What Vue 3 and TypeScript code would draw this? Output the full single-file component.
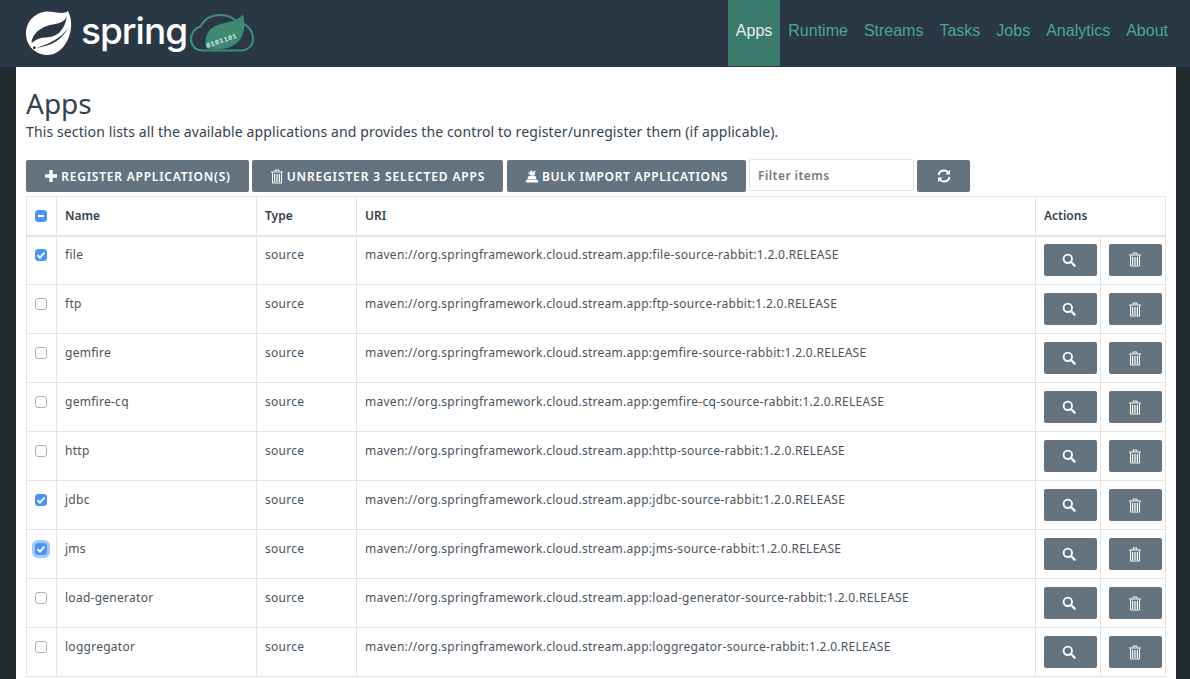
<script setup lang="ts">
interface AppRow {
  name: string;
  checked: boolean;
  focused?: boolean;
}

const navItems = ['Apps', 'Runtime', 'Streams', 'Tasks', 'Jobs', 'Analytics', 'About'];

const rows: AppRow[] = [
  { name: 'file', checked: true },
  { name: 'ftp', checked: false },
  { name: 'gemfire', checked: false },
  { name: 'gemfire-cq', checked: false },
  { name: 'http', checked: false },
  { name: 'jdbc', checked: true },
  { name: 'jms', checked: true, focused: true },
  { name: 'load-generator', checked: false },
  { name: 'loggregator', checked: false },
];

function uri(name: string) {
  return `maven://org.springframework.cloud.stream.app:${name}-source-rabbit:1.2.0.RELEASE`;
}
</script>

<template>
  <div class="page">
    <header class="navbar">
      <div class="brand">
        <svg class="leaf" width="46" height="46" viewBox="0 0 46 46">
          <path fill="#fff" fill-rule="evenodd" d="M22 1.500C29 1.500 37 5 42 1c3 6 4 13 2.500 20C42 34 33 45 21.500 45 10 45 0 36 0 23.500S10 1.500 22 1.500zM41 6.500C38 12 33 13.500 27 14.500 19 15.500 9 20 5.700 30.500L5.700 33C10 29 15 27.500 20 27.500 30 27 38 22 41 6.500zM8.300 36.300a1.400 1.400 0 1 0 .1 0zM10.700 37.800C20 36.500 34 33.500 42 18 35 29 22 34 10.700 37.800z" />
        </svg>
        <span class="wordmark">spring</span>
        <svg class="cloud" width="65" height="42" viewBox="0 0 65 42">
          <path fill="none" stroke="#3f8f78" stroke-width="2" d="M13 38.500C5 38.500 1 33 1 27c0-6 4-11 9.500-12.500C14 7.500 21 3 30 3c7 0 13 2 17 7 8 1 16 7 16 16.500 0 7-5 12-12 12z" />
          <path fill="#3f8873" d="M16 36C14 26 17 18 25 14 33 10 46 11 53 2.500 56 14 54 25 47 31 41 36 27 40 16 36z" />
          <text x="17" y="36" class="bits" transform="rotate(-19 17 36)">0101101</text>
        </svg>
      </div>
      <nav class="nav">
        <a v-for="item in navItems" :key="item" class="nav-link" :class="{ active: item === 'Apps' }">{{ item }}</a>
      </nav>
    </header>

    <main class="content">
      <h1 class="title">Apps</h1>
      <p class="lead">This section lists all the available applications and provides the control to register/unregister them (if applicable).</p>

      <div class="toolbar">
        <button class="btn btn-register">
          <svg class="ico" width="14" height="14" viewBox="0 0 14 14"><path fill="#fff" d="M5.300 1h3.400v4.300H13v3.400H8.700V13H5.300V8.700H1V5.300h4.300z" /></svg>
          REGISTER APPLICATION(S)
        </button>
        <button class="btn btn-unregister">
          <svg class="ico" width="14" height="15" viewBox="0 0 14 15">
            <path fill="none" stroke="#fff" stroke-width="1" d="M5 2.500V1h4v1.500M1 3h12M2.500 3.500v10.500h9V3.500" />
            <path stroke="#fff" stroke-width="1.200" d="M4.600 5v8M7 5v8M9.400 5v8" />
          </svg>
          UNREGISTER 3 SELECTED APPS
        </button>
        <button class="btn btn-bulk">
          <svg class="ico" width="14" height="14" viewBox="0 0 14 14">
            <path fill="#fff" d="M1 11h12v2.500H1zM3.500 7h7l1 3.500h-9.500zM2.500 3l2.500.8L5.800.8 7.500 3l3-1.500-1 5h-4z" />
          </svg>
          BULK IMPORT APPLICATIONS
        </button>
        <input class="filter" type="text" placeholder="Filter items" />
        <button class="btn btn-refresh">
          <svg width="14" height="14" viewBox="0 0 14 14">
            <path fill="none" stroke="#fff" stroke-width="1.800" d="M1.500 6C2 3.500 4.300 1.500 7 1.500c1.800 0 3.300.8 4.300 2M12.500 8c-.5 2.500-2.800 4.500-5.500 4.500-1.800 0-3.300-.8-4.300-2" />
            <path fill="#fff" d="M13 .8V5.500H8.300zM1 13.200V8.500h4.700z" />
          </svg>
        </button>
      </div>

      <table class="grid">
        <colgroup>
          <col class="c-check" />
          <col class="c-name" />
          <col class="c-type" />
          <col />
          <col class="c-act" />
          <col class="c-act" />
        </colgroup>
        <thead>
          <tr>
            <th class="check-cell"><span class="box on"><span class="dash"></span></span></th>
            <th>Name</th>
            <th>Type</th>
            <th>URI</th>
            <th colspan="2">Actions</th>
          </tr>
        </thead>
        <tbody>
          <tr v-for="row in rows" :key="row.name">
            <td class="check-cell">
              <span class="box" :class="{ on: row.checked, focus: row.focused }">
                <svg v-if="row.checked" width="10" height="10" viewBox="0 0 10 10"><path fill="none" stroke="#fff" stroke-width="1.800" d="M1.500 5.200l2.400 2.400 4.600-5" /></svg>
              </span>
            </td>
            <td>{{ row.name }}</td>
            <td>source</td>
            <td>{{ uri(row.name) }}</td>
            <td class="act">
              <button class="btn btn-act" aria-label="Details">
                <svg class="search" width="14" height="14" viewBox="0 0 14 14"><circle cx="5.800" cy="5.800" r="4.200" fill="none" stroke="#fff" stroke-width="1.900" /><path stroke="#fff" stroke-width="2.200" stroke-linecap="round" d="M9 9l3.600 3.600" /></svg>
              </button>
            </td>
            <td class="act">
              <button class="btn btn-act" aria-label="Unregister">
                <svg class="trash" width="14" height="15" viewBox="0 0 14 15">
                  <path fill="none" stroke="#fff" stroke-width="1" d="M5 2.500V1h4v1.500M1 3h12M2.500 3.500v10.500h9V3.500" />
                  <path stroke="#fff" stroke-width="1.200" d="M4.600 5v8M7 5v8M9.400 5v8" />
                </svg>
              </button>
            </td>
          </tr>
        </tbody>
      </table>
    </main>
  </div>
</template>

<style>
html, body {
  background: #232b2e;
  overflow: hidden;
}
</style>

<style scoped>
.page {
  height: 679px;
  overflow: hidden;
  font-family: "Noto Sans", "Open Sans", sans-serif;
  color: #34424f;
}

.navbar {
  height: 67px;
  background: #2a3744;
  display: flex;
  justify-content: space-between;
  padding: 0 14px 0 26px;
  box-sizing: border-box;
}

.brand {
  display: flex;
  align-items: center;
}

.leaf {
  margin-top: -1px;
}

.wordmark {
  font-family: "Inter", "Liberation Sans", sans-serif;
  font-size: 37px;
  font-weight: 500;
  line-height: 1;
  color: #fff;
  margin: -6px 0 0 9px;
  letter-spacing: -1px;
}

.cloud {
  margin: -2px 0 0 3px;
}

.bits {
  font-family: "Liberation Mono", monospace;
  font-size: 7px;
  font-weight: 700;
  letter-spacing: 0.4px;
  fill: #d3e8e0;
}

.nav {
  display: flex;
}

.nav-link {
  height: 66px;
  line-height: 62px;
  padding: 0 8px;
  font-family: "Liberation Sans", Arial, sans-serif;
  font-size: 16px;
  color: #4aa596;
}

.nav-link.active {
  background: #3a7b6d;
  color: #e8f0ee;
}

.content {
  margin: 0 14px 0 16px;
  height: 612px;
  background: #fff;
  padding: 19px 10px 0;
  box-sizing: border-box;
}

.title {
  margin: 0;
  font-size: 28px;
  font-weight: 400;
  line-height: 34px;
  color: #34424f;
}

.lead {
  margin: 2px 0 0;
  font-size: 14px;
  line-height: 20px;
  letter-spacing: 0.12px;
  color: #34424f;
}

.toolbar {
  margin-top: 18px;
  display: flex;
  align-items: flex-start;
  gap: 3px;
}

.btn {
  height: 32px;
  border: 0;
  border-radius: 2px;
  background: #64737d;
  color: #fff;
  font-family: inherit;
  font-size: 12px;
  font-weight: 600;
  letter-spacing: 0.6px;
  display: flex;
  align-items: center;
  justify-content: center;
  padding: 0;
  white-space: nowrap;
}

.ico {
  margin-right: 3px;
}

.btn-register { width: 223px; letter-spacing: 0.77px; }
.btn-unregister { width: 251px; letter-spacing: 0.87px; }
.btn-bulk { width: 239px; margin-left: 1px; letter-spacing: 0.68px; }
.btn-refresh { width: 53px; }

.filter {
  width: 165px;
  height: 32px;
  margin-top: -1px;
  box-sizing: border-box;
  border: 1px solid #e1e5e8;
  border-radius: 2px;
  padding: 0 8px;
  font-family: inherit;
  font-size: 12px;
  font-weight: 600;
  letter-spacing: 0.45px;
  outline: none;
}

.filter::placeholder {
  color: #6f7b84;
  opacity: 1;
}

.grid {
  margin-top: 4px;
  width: 1140px;
  table-layout: fixed;
  border-collapse: collapse;
  font-size: 12px;
}

.c-check { width: 30px; }
.c-name { width: 200px; }
.c-type { width: 100px; }
.c-act { width: 65px; }

.grid th,
.grid td {
  box-sizing: border-box;
  border: 1px solid #e1e5e8;
  text-align: left;
  vertical-align: top;
  padding: 0 8px;
  white-space: nowrap;
  overflow: hidden;
}

.grid th {
  height: 39px;
  line-height: 37px;
  font-weight: 600;
  border-bottom-width: 2px;
}

.grid td {
  height: 49px;
  line-height: 37px;
  letter-spacing: 0.27px;
  color: #48535e;
}

.grid tbody tr:first-child td {
  line-height: 36px;
}

.grid .check-cell {
  padding: 0 0 0 8px;
  overflow: visible;
}

.box {
  display: inline-flex;
  align-items: center;
  justify-content: center;
  box-sizing: border-box;
  width: 12px;
  height: 12px;
  border-radius: 3px;
  border: 1px solid #a9b0b5;
  background: #fff;
  vertical-align: middle;
  margin-top: -1px;
}

.box.on {
  background: #4a94f4;
  border-color: #4a94f4;
}

.box.focus {
  box-shadow: 0 0 0 3px #a3c9f9;
}

.dash {
  width: 6px;
  height: 2px;
  background: #fff;
}

.grid .act {
  padding: 8px 3px 0 8px;
  overflow: visible;
}

.grid tbody tr:first-child .act {
  padding-top: 7px;
}

.btn-act {
  width: 53px;
}

.search {
  margin-right: 3px;
}

.trash {
  margin-right: 1px;
}
</style>
